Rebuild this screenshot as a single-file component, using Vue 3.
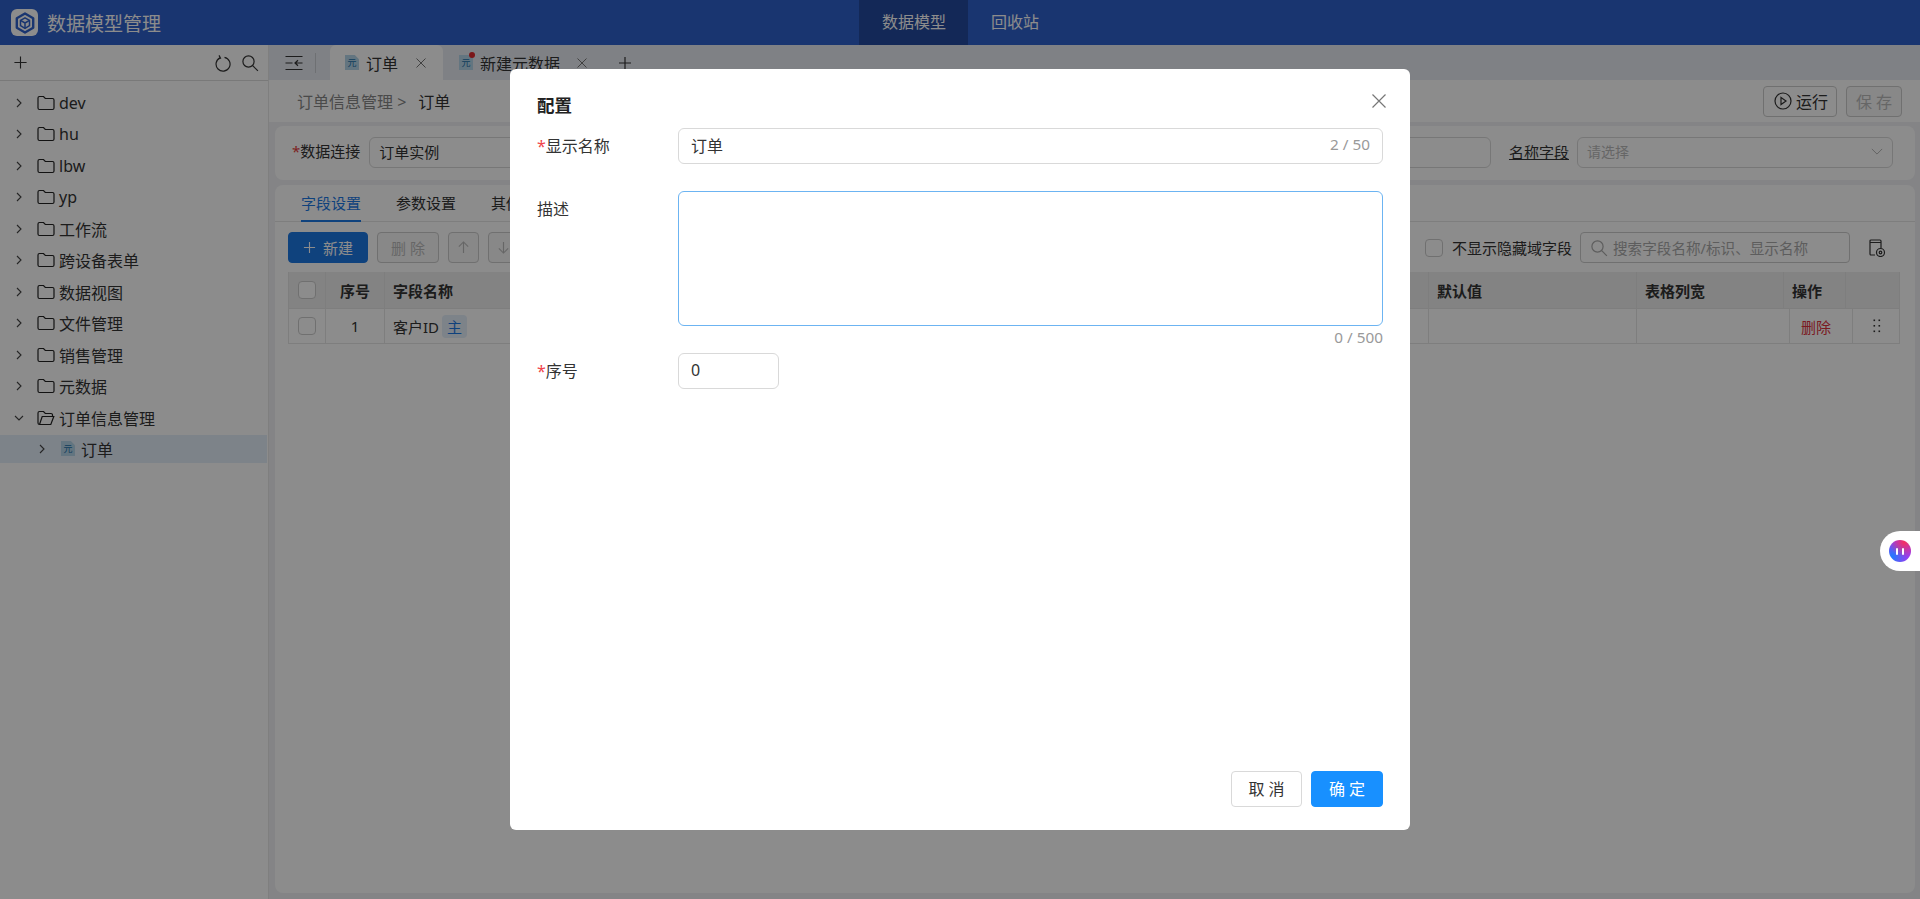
<script setup>
import { ref } from "vue";

const folders = ref(["dev", "hu", "lbw", "yp", "工作流", "跨设备表单", "数据视图", "文件管理", "销售管理", "元数据"]);
const displayName = ref("订单");
const description = ref("");
const sortNo = ref("0");
</script>

<template>
  <div class="page">
    <header class="topbar">
      <div class="brand">
        <span class="logo">
          <svg viewBox="0 0 24 24" width="24" height="24" fill="none" stroke="#2f61cc" stroke-width="2.400" stroke-linejoin="round">
            <path d="M12 2.500l8.200 4.700v9.600L12 21.500l-8.200-4.700V7.200z" />
            <path d="M12 6.800l4.500 2.500v5.400L12 17.300l-4.500-2.600V9.300z" stroke-width="1.500" />
            <path d="M7.500 9.300l4.500 2.700 4.500-2.700M12 12v5.300" stroke-width="1.500" />
          </svg>
        </span>
        <span class="brand-name">数据模型管理</span>
      </div>
      <nav class="topnav">
        <a class="topnav-item active">数据模型</a>
        <a class="topnav-item">回收站</a>
      </nav>
    </header>

    <div class="workspace">
      <aside class="sidebar">
        <div class="side-tools">
          <svg class="ico plus" viewBox="0 0 16 16"><path d="M8 1.500v13M1.500 8h13" /></svg>
          <span class="side-tools-right">
            <svg class="ico" viewBox="0 0 18 18"><path d="M10.500 3.300a7 7 0 1 1-4.600 .6M5 1.400l1.500 2.700-2.800 1" /></svg>
            <svg class="ico" viewBox="0 0 18 18"><circle cx="7.500" cy="7.500" r="5.600" /><path d="M11.700 11.700l5.200 5.200" /></svg>
          </span>
        </div>
        <ul class="tree">
          <li class="tree-row" v-for="name in folders" :key="name">
            <svg class="arrow" viewBox="0 0 10 10"><path d="M3 1l4 4-4 4" /></svg>
            <svg class="folder" viewBox="0 0 18 16"><path d="M1 3a1.500 1.500 0 0 1 1.500-1.500h4l1.800 2h7.200A1.500 1.500 0 0 1 17 5v8a1.500 1.500 0 0 1-1.500 1.500h-13A1.500 1.500 0 0 1 1 13z" /></svg>
            <span>{{ name }}</span>
          </li>
          <li class="tree-row">
            <svg class="arrow" viewBox="0 0 10 10"><path d="M1 3l4 4 4-4" /></svg>
            <svg class="folder" viewBox="0 0 18 16"><path d="M2.500 14.500A1.500 1.500 0 0 1 1 13V3a1.500 1.500 0 0 1 1.500-1.500h4l1.800 2H14A1.500 1.500 0 0 1 15.500 5v1.500M2.500 14.500h11.300l3-8H5.200z" /></svg>
            <span>订单信息管理</span>
          </li>
          <li class="tree-row child selected">
            <svg class="arrow" viewBox="0 0 10 10"><path d="M3 1l4 4-4 4" /></svg>
            <span class="meta-icon">元</span>
            <span>订单</span>
          </li>
        </ul>
      </aside>

      <main class="main">
        <div class="tabbar">
          <svg class="ico menu-ico" viewBox="0 0 18 14"><path d="M0.500 .5h17M0.500 13.500h17M0.500 7h7M17.500 7h-7.500M13 4.300L10 7l3 2.700" /></svg>
          <i class="tab-divider"></i>
          <div class="tab active">
            <span class="meta-icon">元</span>
            <span class="tab-name">订单</span>
            <svg class="tab-close" viewBox="0 0 12 12"><path d="M1.500 1.500l9 9M10.500 1.500l-9 9" /></svg>
          </div>
          <div class="tab">
            <span class="meta-icon dotted">元</span>
            <span class="tab-name">新建元数据</span>
            <svg class="tab-close" viewBox="0 0 12 12"><path d="M1.500 1.500l9 9M10.500 1.500l-9 9" /></svg>
          </div>
          <svg class="ico tab-add" viewBox="0 0 14 14"><path d="M7 1v12M1 7h12" /></svg>
        </div>

        <div class="crumbbar">
          <span class="crumb-parent">订单信息管理 &gt;</span>
          <span class="crumb-current">订单</span>
          <span class="crumb-actions">
            <button class="btn run">
              <svg class="ico" viewBox="0 0 18 18"><circle cx="9" cy="9" r="8" /><path d="M7 5.500l5 3.500-5 3.500z" /></svg>
              运行
            </button>
            <button class="btn disabled save">保 存</button>
          </span>
        </div>

        <section class="card conn">
          <label class="conn-label"><b>*</b>数据连接</label>
          <div class="fake-input grow"><span>订单实例</span></div>
          <label class="conn-name">名称字段</label>
          <div class="fake-input select">
            <span>请选择</span>
            <svg class="caret" viewBox="0 0 14 8"><path d="M1 1l6 6 6-6" /></svg>
          </div>
        </section>

        <section class="card fields">
          <div class="subtabs">
            <span class="subtab active">字段设置</span>
            <span class="subtab">参数设置</span>
            <span class="subtab">其他</span>
          </div>
          <div class="toolbar">
            <button class="btn primary">
              <svg class="ico" viewBox="0 0 14 14"><path d="M7 1v12M1 7h12" /></svg>
              新建
            </button>
            <button class="btn disabled del">删 除</button>
            <button class="btn disabled sq"><svg class="ico" viewBox="0 0 14 14"><path d="M7 13V1M2 6l5-5 5 5" /></svg></button>
            <button class="btn disabled sq"><svg class="ico" viewBox="0 0 14 14"><path d="M7 1v12M2 8l5 5 5-5" /></svg></button>
            <span class="toolbar-right">
              <i class="check"></i>
              <span class="hide-label">不显示隐藏域字段</span>
              <span class="search">
                <svg class="ico" viewBox="0 0 18 18"><circle cx="7.500" cy="7.500" r="5.600" /><path d="M11.700 11.700l5.200 5.200" /></svg>
                搜索字段名称/标识、显示名称
              </span>
              <svg class="ico view-ico" viewBox="0 0 18 18"><path d="M7 16H3a1 1 0 0 1-1-1V2a1 1 0 0 1 1-1h9a1 1 0 0 1 1 1v7M2 3.500h11" /><circle cx="12.500" cy="13.500" r="4" /><circle cx="12.500" cy="13.500" r="1.300" /></svg>
            </span>
          </div>
          <div class="table">
            <div class="thead">
              <span class="cell center"><i class="check"></i></span>
              <span class="cell center">序号</span>
              <span class="cell">字段名称</span>
              <span class="cell">默认值</span>
              <span class="cell">表格列宽</span>
              <span class="cell">操作</span>
              <span class="cell"></span>
            </div>
            <div class="trow">
              <span class="cell center"><i class="check"></i></span>
              <span class="cell center">1</span>
              <span class="cell">客户ID<em class="pk">主</em></span>
              <span class="cell"></span>
              <span class="cell"></span>
              <span class="cell center danger">删除</span>
              <span class="cell center dots">
                <svg viewBox="0 0 8 14" width="8" height="14"><g fill="#333"><rect x="0.500" y="0.500" width="1.600" height="1.600" /><rect x="5.500" y="0.500" width="1.600" height="1.600" /><rect x="0.500" y="6" width="1.600" height="1.600" /><rect x="5.500" y="6" width="1.600" height="1.600" /><rect x="0.500" y="11.500" width="1.600" height="1.600" /><rect x="5.500" y="11.500" width="1.600" height="1.600" /></g></svg>
              </span>
            </div>
          </div>
        </section>
      </main>
    </div>

    <div class="mask">
      <div class="dialog">
        <svg class="dialog-close" viewBox="0 0 16 16"><path d="M1.500 1.500l13 13M14.500 1.500l-13 13" /></svg>
        <h3 class="dialog-title">配置</h3>
        <div class="form-row">
          <label class="form-label"><b>*</b>显示名称</label>
          <div class="input-wrap">
            <input class="form-input" v-model="displayName" />
            <span class="inline-count">2 / 50</span>
          </div>
        </div>
        <div class="form-row desc-row">
          <label class="form-label desc-label">描述</label>
          <div class="input-wrap column">
            <textarea class="form-area" v-model="description"></textarea>
            <span class="area-count">0 / 500</span>
          </div>
        </div>
        <div class="form-row">
          <label class="form-label"><b>*</b>序号</label>
          <input class="form-input short" v-model="sortNo" />
        </div>
        <div class="dialog-footer">
          <button class="dlg-btn">取 消</button>
          <button class="dlg-btn ok">确 定</button>
        </div>
      </div>
    </div>

    <div class="assistant"><span class="orb"><i></i><i></i></span></div>
  </div>
</template>

<style>
html,
body {
  margin: 0;
  overflow: hidden;
}
</style>

<style scoped>
.page {
  height: 899px;
  display: flex;
  flex-direction: column;
  background: #fff;
  color: #333;
  font-family: "Noto Sans", "Noto Sans CJK SC", sans-serif;
  font-size: 15px;
}

.ico {
  width: 18px;
  height: 18px;
  fill: none;
  stroke: currentColor;
  stroke-width: 1.200;
  flex: none;
}

/* top bar */
.topbar {
  height: 45px;
  flex: none;
  background: #2f61cc;
  display: flex;
  position: relative;
  color: #fff;
}

.brand {
  display: flex;
  align-items: center;
  padding-left: 11px;
  gap: 9px;
}

.logo {
  width: 27px;
  height: 27px;
  border-radius: 6px;
  background: #fff;
  display: flex;
  align-items: center;
  justify-content: center;
}

.brand-name {
  font-size: 19px;
}

.topnav {
  display: flex;
  margin-left: 698px;
}

.topnav-item {
  font-size: 16px;
  line-height: 45px;
  padding: 0 22px 0 23px;
}

.topnav-item.active {
  background: #234a9e;
}

/* left tree */
.workspace {
  flex: 1;
  display: flex;
  min-height: 0;
}

.sidebar {
  width: 269px;
  flex: none;
  border-right: 1px solid #e8e8e8;
  box-sizing: border-box;
}

.side-tools {
  height: 36px;
  box-sizing: border-box;
  border-bottom: 1px solid #ddd;
  display: flex;
  align-items: center;
  justify-content: space-between;
  padding: 0 9px 0 13px;
}

.side-tools .plus {
  width: 15px;
  height: 15px;
}

.side-tools-right {
  display: flex;
  gap: 9px;
}

.tree {
  list-style: none;
  margin: 0;
  padding: 8px 0 0;
}

.tree-row {
  height: 27px;
  margin-bottom: 4.500px;
  display: flex;
  align-items: center;
  font-size: 16px;
  padding-left: 14px;
}

.arrow {
  width: 10px;
  height: 10px;
  fill: none;
  stroke: #444;
  stroke-width: 1.100;
  margin-right: 13px;
}

.folder {
  width: 18px;
  height: 16px;
  fill: none;
  stroke: #222;
  stroke-width: 1.200;
  margin-right: 4px;
}

.tree-row.child {
  padding-left: 37px;
  margin-right: 1px;
  margin-top: -1px;
  height: 28px;
}

.tree-row.child .arrow {
  margin-right: 14px;
}

.tree-row.child .meta-icon {
  margin-right: 6px;
}

.tree-row.selected {
  background: #e3eefa;
}

.meta-icon {
  width: 14px;
  height: 15px;
  flex: none;
  position: relative;
  background: #b5d6ea;
  color: #1a6ea8;
  font-size: 9px;
  line-height: 16px;
  text-align: center;
  clip-path: polygon(0 0, 70% 0, 100% 28%, 100% 100%, 0 100%);
}

/* tabs */
.main {
  flex: 1;
  min-width: 0;
  background: #f0f1f4;
  display: flex;
  flex-direction: column;
}

.tabbar {
  height: 35px;
  flex: none;
  background: #e7ebf3;
  display: flex;
  align-items: center;
  padding-left: 16px;
}

.menu-ico {
  width: 18px;
  height: 14px;
}

.tab-divider {
  width: 1px;
  height: 20px;
  background: #c9ccd2;
  margin: 0 14px 0 12px;
}

.tab {
  height: 35px;
  width: 113px;
  box-sizing: border-box;
  display: flex;
  align-items: center;
  padding-left: 15px;
  font-size: 16px;
  white-space: nowrap;
  border-radius: 6px 6px 0 0;
}

.tab.active {
  background: #fff;
}

.tab + .tab {
  width: auto;
  padding-left: 16px;
}

.tab-name {
  margin-left: 7px;
}

.tab-close {
  width: 12px;
  height: 12px;
  fill: none;
  stroke: #777;
  margin-left: 16px;
}

.tab.active .tab-close {
  margin-left: 17px;
}

.dotted {
  overflow: visible;
  clip-path: none;
}

.dotted::after {
  content: "";
  position: absolute;
  width: 6px;
  height: 6px;
  border-radius: 50%;
  background: #e0282e;
  top: -3px;
  right: -2px;
}

.tab-add {
  width: 14px;
  height: 14px;
  margin-left: 30px;
}

/* breadcrumb */
.crumbbar {
  height: 42px;
  flex: none;
  background: #fff;
  display: flex;
  align-items: center;
  padding-left: 28px;
  font-size: 16px;
  box-sizing: border-box;
}

.crumb-parent {
  color: #888;
}

.crumb-current {
  margin-left: 12px;
}

.crumb-actions {
  margin-left: auto;
  display: flex;
  gap: 9px;
  padding-right: 18px;
}

.btn {
  height: 31px;
  box-sizing: border-box;
  border: 1px solid #ccc;
  border-radius: 4px;
  background: #fff;
  font: inherit;
  font-size: 15px;
  color: #333;
  display: inline-flex;
  align-items: center;
  justify-content: center;
  padding: 0;
}

.btn.run {
  width: 74px;
  font-size: 16px;
  gap: 4px;
  padding-left: 2px;
}

.btn.save {
  width: 56px;
  font-size: 16px;
}

.btn.disabled {
  color: #bbb;
  background: #f7f7f7;
}

.btn.primary {
  width: 80px;
  background: #1d79e4;
  border-color: #1d79e4;
  color: #fff;
  gap: 7px;
}

.btn.primary .ico {
  width: 13px;
  height: 13px;
}

.btn.del {
  width: 62px;
}

.btn.sq {
  width: 31px;
}

.btn.sq .ico {
  width: 13px;
  height: 13px;
}

/* cards */
.card {
  background: #fff;
  margin: 4px 0 5px 6px;
  margin-right: 5px;
  border-radius: 8px;
}

.conn {
  height: 54px;
  flex: none;
  display: flex;
  align-items: center;
  padding: 0 22px 2px 17px;
  box-sizing: border-box;
  margin-bottom: 5px;
}

.conn-label {
  white-space: nowrap;
  margin: -3px 9px 0 0;
}

.conn-label b {
  color: #e43d3d;
  font-weight: 400;
}

.fake-input {
  height: 31px;
  box-sizing: border-box;
  border: 1px solid #d9d9d9;
  border-radius: 6px;
  padding: 0 9px 2px;
  display: flex;
  align-items: center;
  font-size: 15px;
}

.grow {
  flex: 1;
}

.conn-name {
  text-decoration: underline;
  margin: -2px 8px 0 18px;
  white-space: nowrap;
}

.select {
  width: 316px;
  color: #bbb;
  justify-content: space-between;
  font-size: 14px;
}

.caret {
  width: 12px;
  height: 7px;
  fill: none;
  stroke: #aaa;
}

.fields {
  flex: 1;
  margin-top: 0;
  margin-bottom: 6px;
  min-height: 0;
}

.subtabs {
  height: 37px;
  border-bottom: 1px solid #e6e6e6;
  display: flex;
  padding-left: 26px;
  gap: 35px;
  box-sizing: border-box;
}

.subtab {
  line-height: 36px;
  height: 37px;
  box-sizing: border-box;
}

.subtab.active {
  color: #1d79e4;
  border-bottom: 2px solid #1d79e4;
}

.toolbar {
  display: flex;
  align-items: center;
  gap: 9px;
  padding: 10px 15px 0 13px;
}

.toolbar-right {
  margin-left: auto;
  display: flex;
  align-items: center;
}

.check {
  display: inline-block;
  width: 18px;
  height: 18px;
  box-sizing: border-box;
  border: 1px solid #ccc;
  border-radius: 4px;
  background: #fff;
}

.hide-label {
  margin: 0 8px 0 9px;
  white-space: nowrap;
}

.search {
  width: 270px;
  height: 31px;
  box-sizing: border-box;
  border: 1px solid #ccc;
  border-radius: 4px;
  color: #aaa;
  display: flex;
  align-items: center;
  gap: 5px;
  padding-left: 9px;
  white-space: nowrap;
  font-size: 14.600px;
}

.view-ico {
  margin-left: 18px;
  margin-right: 14px;
}

/* table */
.table {
  margin: 9px 15px 0 13px;
}

.thead,
.trow {
  display: grid;
  border-left: 1px solid #e6e6e6;
  border-bottom: 1px solid #e6e6e6;
  box-sizing: border-box;
}

.thead {
  height: 37px;
  grid-template-columns: 37px 59px 1044px 208px 147px 62px 1fr;
  background: #eee;
  font-weight: 700;
}

.trow {
  height: 35px;
  grid-template-columns: 37px 59px 1044px 208px 153px 63px 1fr;
}

.cell {
  display: flex;
  align-items: center;
  padding: 0 8px;
  border-right: 1px solid #e6e6e6;
  white-space: nowrap;
}

.cell.center {
  justify-content: center;
  padding: 0;
}

.cell.danger {
  color: #e0323c;
  padding-right: 10px;
}

.cell.dots {
  padding-left: 2px;
}

.pk {
  font-style: normal;
  color: #1d79e4;
  background: #e3eefa;
  border-radius: 4px;
  width: 25px;
  height: 23px;
  margin-left: 3px;
  text-align: center;
  line-height: 24px;
}

/* dialog */
.mask {
  position: fixed;
  inset: 0;
  background: rgba(0, 0, 0, 0.45);
  display: flex;
  justify-content: center;
  padding-top: 69px;
}

.dialog {
  position: relative;
  width: 900px;
  height: 761px;
  box-sizing: border-box;
  background: #fff;
  border-radius: 6px;
  padding: 25px 27px 23px;
  display: flex;
  flex-direction: column;
  color: #333;
}

.dialog-close {
  position: absolute;
  top: 24px;
  right: 23px;
  width: 16px;
  height: 16px;
  fill: none;
  stroke: #777;
  stroke-width: 1.200;
}

.dialog-title {
  margin: 0 0 12px;
  font-size: 17.500px;
  line-height: 22px;
  font-weight: 700;
  color: #222;
}

.form-row {
  display: flex;
  align-items: center;
}

.desc-row {
  align-items: flex-start;
  margin-top: 27px;
}

.form-label {
  width: 141px;
  flex: none;
  font-size: 16px;
  margin-top: -3px;
}

.form-label b {
  color: #f0444c;
  font-weight: 400;
}

.desc-label {
  margin-top: 0;
  padding-top: 5px;
}

.input-wrap {
  position: relative;
  flex: 1;
}

.input-wrap.column {
  display: flex;
  flex-direction: column;
}

.form-input {
  width: 100%;
  height: 36px;
  box-sizing: border-box;
  border: 1px solid #d9d9d9;
  border-radius: 6px;
  padding: 0 12px 2px;
  outline: none;
  font: inherit;
  font-size: 16px;
  color: #333;
}

.form-input.short {
  width: 101px;
}

.inline-count {
  position: absolute;
  right: 13px;
  top: 6px;
  color: #999;
  font-size: 15.300px;
}

.form-area {
  height: 135px;
  box-sizing: border-box;
  border: 1px solid #6cb4f2;
  border-radius: 6px;
  outline: none;
  resize: none;
  padding: 6px 12px;
  font: inherit;
  display: block;
}

.area-count {
  text-align: right;
  color: #999;
  font-size: 15.300px;
  line-height: 22px;
  height: 27px;
}

.dialog-footer {
  margin-top: auto;
  display: flex;
  justify-content: flex-end;
  gap: 9px;
}

.dlg-btn {
  width: 71px;
  height: 36px;
  box-sizing: border-box;
  border: 1px solid #d9d9d9;
  border-radius: 4px;
  background: #fff;
  font: inherit;
  font-size: 16px;
  color: #333;
  padding: 0 0 2px;
}

.dlg-btn.ok {
  width: 72px;
  background: #1890ff;
  border-color: #1890ff;
  color: #fff;
}

/* floating assistant */
.assistant {
  position: fixed;
  right: 0;
  top: 531px;
  width: 40px;
  height: 40px;
  background: #fff;
  border-radius: 20px 0 0 20px;
  display: flex;
  align-items: center;
  padding-left: 9px;
  box-sizing: border-box;
}

.orb {
  width: 22px;
  height: 22px;
  border-radius: 50%;
  background:
    radial-gradient(circle at 70% 10%, #f5305f 0%, rgba(245, 48, 95, 0) 60%),
    radial-gradient(circle at 15% 75%, #1f7bff 0%, rgba(31, 123, 255, 0) 65%),
    #9a3cf0;
  display: flex;
  align-items: center;
  justify-content: center;
  gap: 4px;
}

.orb i {
  width: 2px;
  height: 7px;
  background: #fff;
  border-radius: 1px;
}
</style>
